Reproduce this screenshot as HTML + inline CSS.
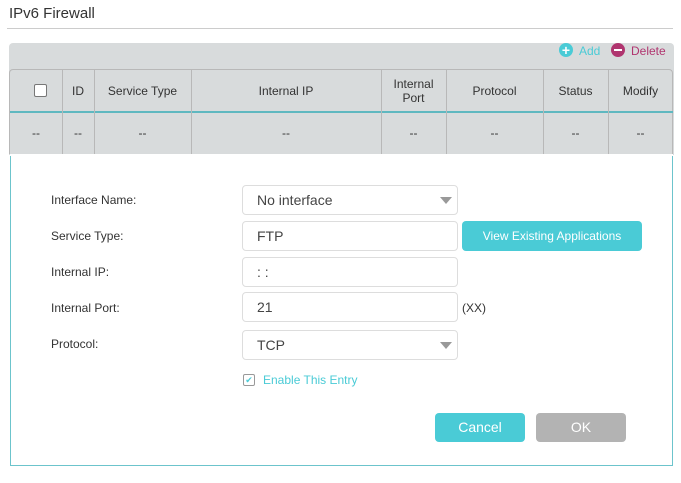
<!DOCTYPE html><html><head><style>
body{margin:0;width:681px;height:483px;background:#fff;font-family:"Liberation Sans",sans-serif;position:relative;overflow:hidden}
.a{position:absolute}
.t{font-size:15px;color:#333;left:9px;top:5px}
.col{position:absolute;top:69px;height:85px;border-left:1px solid #b8b8b8}
.h{position:absolute;font-size:12px;color:#333;text-align:center;top:69px;height:43px;display:flex;align-items:center;justify-content:center;line-height:14px}
.d{position:absolute;font-size:12px;color:#333;text-align:center;top:112px;height:42px;line-height:42px}
.lbl{position:absolute;left:51px;font-size:12px;color:#333}
.in{position:absolute;left:242px;width:214px;height:28px;border:1px solid #ddd;border-radius:4px;font-size:14px;color:#444;line-height:28px;text-indent:14px;background:#fff}
.arr{position:absolute;right:5px;top:11px;width:0;height:0;border-left:6px solid transparent;border-right:6px solid transparent;border-top:7px solid #999}
.btn{position:absolute;border-radius:4px;color:#fff;text-align:center}
</style></head><body>
<div class="a t">IPv6 Firewall</div>
<div class="a" style="left:7px;top:28px;width:666px;height:1px;background:#ccc"></div>
<div class="a" style="left:9px;top:43px;width:665px;height:112px;background:#d8dbdc;border-radius:4px 4px 0 0"></div>
<div class="a" style="left:559px;top:43px;width:14px;height:14px;border-radius:50%;background:#4acbd6;color:#fff;font-size:14px;line-height:14px;text-align:center;font-weight:bold">+</div>
<div class="a" style="left:579px;top:44px;font-size:12px;color:#4acbd6">Add</div>
<div class="a" style="left:611px;top:43px;width:14px;height:14px;border-radius:50%;background:#b0356f"><div style="margin:6px 3px;height:2px;background:#fff"></div></div>
<div class="a" style="left:631px;top:44px;font-size:12px;color:#b0356f">Delete</div>
<div class="a" style="left:9px;top:69px;width:664px;height:85px;border:1px solid #b8b8b8;border-bottom:none;box-sizing:border-box;border-radius:4px 4px 0 0"></div>
<div class="a" style="left:10px;top:111px;width:663px;height:2px;background:#5fb8c0"></div>
<div class="col" style="left:62px"></div><div class="col" style="left:94px"></div><div class="col" style="left:191px"></div><div class="col" style="left:381px"></div><div class="col" style="left:446px"></div><div class="col" style="left:543px"></div><div class="col" style="left:608px"></div>
<div class="a" style="left:34px;top:84px;width:11px;height:11px;border:1px solid #777;border-radius:2px;background:#fff"></div>
<div class="h" style="left:62px;width:32px">ID</div>
<div class="h" style="left:94px;width:97px">Service Type</div>
<div class="h" style="left:191px;width:190px">Internal IP</div>
<div class="h" style="left:381px;width:65px">Internal<br>Port</div>
<div class="h" style="left:446px;width:97px">Protocol</div>
<div class="h" style="left:543px;width:65px">Status</div>
<div class="h" style="left:608px;width:65px">Modify</div>
<div class="d" style="left:10px;width:52px">--</div><div class="d" style="left:62px;width:32px">--</div><div class="d" style="left:94px;width:97px">--</div><div class="d" style="left:191px;width:190px">--</div><div class="d" style="left:381px;width:65px">--</div><div class="d" style="left:446px;width:97px">--</div><div class="d" style="left:543px;width:65px">--</div><div class="d" style="left:608px;width:65px">--</div>
<div class="a" style="left:10px;top:154px;width:661px;height:311px;border:1px solid #6cc4cc;border-top:none;background:#fff"></div>
<div class="a" style="left:10px;top:154px;width:663px;height:2px;background:#fff"></div>
<div class="lbl" style="top:193px">Interface Name:</div>
<div class="lbl" style="top:229px">Service Type:</div>
<div class="lbl" style="top:265px">Internal IP:</div>
<div class="lbl" style="top:301px">Internal Port:</div>
<div class="lbl" style="top:337px">Protocol:</div>
<div class="in" style="top:185px">No interface<div class="arr"></div></div>
<div class="in" style="top:221px">FTP</div>
<div class="in" style="top:257px">: :</div>
<div class="in" style="top:292px">21</div>
<div class="in" style="top:330px">TCP<div class="arr"></div></div>
<div class="btn" style="left:462px;top:221px;width:180px;height:30px;line-height:30px;background:#4acbd6;font-size:12px">View Existing Applications</div>
<div class="a" style="left:462px;top:301px;font-size:12px;color:#333">(XX)</div>
<div class="a" style="left:243px;top:374px;width:10px;height:10px;border:1px solid #999;border-radius:2px;color:#4acbd6;font-size:9px;line-height:10px;text-align:center">✔</div>
<div class="a" style="left:263px;top:373px;font-size:12px;color:#4acbd6">Enable This Entry</div>
<div class="btn" style="left:435px;top:413px;width:90px;height:29px;line-height:29px;background:#4acbd6;font-size:14px">Cancel</div>
<div class="btn" style="left:536px;top:413px;width:90px;height:29px;line-height:29px;background:#b3b3b3;font-size:14px">OK</div>
</body></html>
